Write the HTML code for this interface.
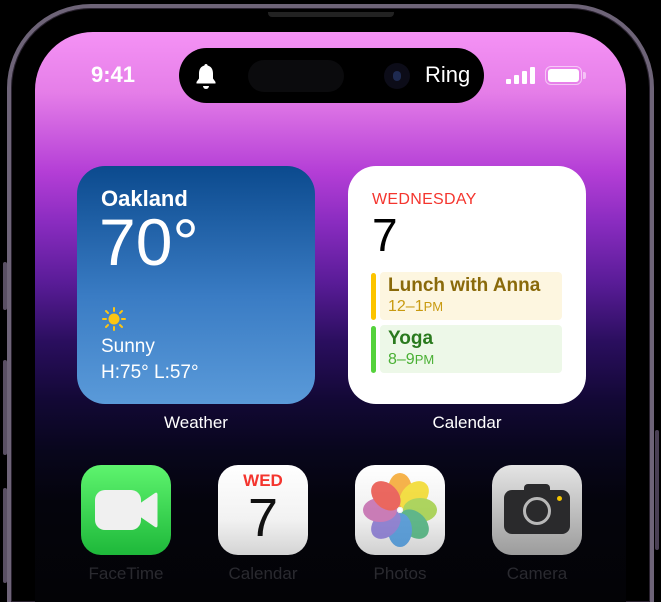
<!DOCTYPE html>
<html><head><meta charset="utf-8"><style>
*{margin:0;padding:0;box-sizing:border-box}
html,body{width:661px;height:602px;overflow:hidden}
body{background:#000;position:relative;font-family:"Liberation Sans",sans-serif}
.frame{position:absolute;left:7px;top:4px;width:647px;height:598px;border-radius:84px 84px 0 0;border:4px solid #6e6478;border-bottom:none;box-shadow:inset 0 0 0 1px #2a2230}
.screen{position:absolute;left:35px;top:32px;width:591px;height:570px;border-radius:58px 58px 0 0;background:linear-gradient(180deg,#f592f5 0px,#e57ee8 60px,#b43ed6 140px,#8a2cc0 190px,#5a1c98 250px,#2a0e5e 310px,#120834 370px,#08061c 420px,#04040c 470px,#030306 570px);overflow:hidden}
.abs{position:absolute}
.island{left:179px;top:48px;width:305px;height:55px;border-radius:28px;background:#000}
.w{border-radius:28px;width:238px;height:238px;top:166px}
.lbl{color:#fff;font-size:17px;text-align:center;width:238px;top:413px}
.icon{top:465px;width:90px;height:90px;border-radius:20px;overflow:hidden}
.il{top:564px;width:110px;text-align:center;font-size:17px;color:#2a2a30}
</style></head><body>
<div class="frame"></div>
<div class="abs" style="left:268px;top:12px;width:126px;height:5px;background:#222;border-radius:0 0 4px 4px"></div>
<div class="abs" style="left:3px;top:262px;width:4px;height:48px;background:#5a5064;border-radius:2px"></div>
<div class="abs" style="left:3px;top:360px;width:4px;height:95px;background:#5a5064;border-radius:2px"></div>
<div class="abs" style="left:3px;top:488px;width:4px;height:95px;background:#5a5064;border-radius:2px"></div>
<div class="abs" style="left:655px;top:430px;width:4px;height:120px;background:#4a4054;border-radius:2px"></div>
<div class="screen"></div>
<div class="abs" style="left:91px;top:62px;color:#fff;font-size:22px;font-weight:700">9:41</div>
<div class="abs island"></div>
<div class="abs" style="left:248px;top:60px;width:96px;height:32px;border-radius:16px;background:#0b0b0d"></div>
<div class="abs" style="left:384px;top:63px;width:26px;height:26px;border-radius:13px;background:#0c0c18"><div class="abs" style="left:9px;top:8px;width:8px;height:10px;border-radius:4px;background:#1e2a50"></div></div>
<svg class="abs" style="left:193px;top:62px" width="26" height="28" viewBox="0 0 26 28"><path d="M13 2c1 0 1.6.7 1.6 1.5 3.8 1 5.4 4 5.4 8v5l2.5 3.5v1.5H3.5V20L6 16.5v-5c0-4 1.6-7 5.4-8C11.4 2.7 12 2 13 2z" fill="#fff"/><path d="M10 24h6a3 3 0 0 1-6 0z" fill="#fff"/></svg>
<div class="abs" style="left:425px;top:62px;color:#fff;font-size:22px">Ring</div>
<div class="abs" style="left:506px;top:79px;width:5px;height:5px;background:#fff;border-radius:1px"></div>
<div class="abs" style="left:514px;top:75px;width:5px;height:9px;background:#fff;border-radius:1px"></div>
<div class="abs" style="left:522px;top:71px;width:5px;height:13px;background:#fff;border-radius:1px"></div>
<div class="abs" style="left:530px;top:67px;width:5px;height:17px;background:#fff;border-radius:1px"></div>
<div class="abs" style="left:545px;top:66px;width:37px;height:19px;border:1.5px solid rgba(255,255,255,.55);border-radius:6px;padding:2px"><div style="width:100%;height:100%;background:#fff;border-radius:3px"></div></div>
<div class="abs" style="left:583px;top:72px;width:3px;height:7px;background:rgba(255,255,255,.5);border-radius:0 2px 2px 0"></div>

<div class="abs w" style="left:77px;background:linear-gradient(180deg,#0b4a8e,#3a7cc4 55%,#5a9ad9)">
<div class="abs" style="left:24px;top:20px;color:#fff;font-size:22px;font-weight:700">Oakland</div>
<div class="abs" style="left:22px;top:38px;color:#fff;font-size:66px;font-weight:300">70°</div>
<svg class="abs" style="left:24px;top:140px" width="26" height="26" viewBox="0 0 26 26"><circle cx="13" cy="13" r="5.5" fill="#fcc514"/><g stroke="#fcc514" stroke-width="2" stroke-linecap="round"><path d="M13 2v3M13 21v3M2 13h3M21 13h3M5 5l2 2M19 19l2 2M5 21l2-2M19 7l2-2"/></g></svg>
<div class="abs" style="left:24px;top:170px;color:#fff;font-size:19px">Sunny</div>
<div class="abs" style="left:24px;top:196px;color:#fff;font-size:19px">H:75° L:57°</div>
</div>
<div class="abs lbl" style="left:77px">Weather</div>

<div class="abs w" style="left:348px;background:#fff">
<div class="abs" style="left:24px;top:25px;color:#f4352e;font-size:16px;letter-spacing:.3px">WEDNESDAY</div>
<div class="abs" style="left:24px;top:42px;color:#000;font-size:46px;font-weight:300">7</div>
<div class="abs" style="left:23px;top:107px;width:5px;height:47px;background:#fcc400;border-radius:3px"></div>
<div class="abs" style="left:32px;top:106px;width:182px;height:48px;background:#fdf6e0;border-radius:4px"></div>
<div class="abs" style="left:40px;top:109px;color:#8a6a0a;font-size:19px;font-weight:600">Lunch with Anna</div>
<div class="abs" style="left:40px;top:132px;color:#c89a10;font-size:16px">12–1<span style="font-size:13px">PM</span></div>
<div class="abs" style="left:23px;top:160px;width:5px;height:47px;background:#55d23c;border-radius:3px"></div>
<div class="abs" style="left:32px;top:159px;width:182px;height:48px;background:#edf8e8;border-radius:4px"></div>
<div class="abs" style="left:40px;top:162px;color:#2a7a1e;font-size:19px;font-weight:600">Yoga</div>
<div class="abs" style="left:40px;top:185px;color:#4ab034;font-size:16px">8–9<span style="font-size:13px">PM</span></div>
</div>
<div class="abs lbl" style="left:348px">Calendar</div>

<div class="abs icon" style="left:81px;background:linear-gradient(180deg,#5ef46e,#1eb83a)">
<div class="abs" style="left:14px;top:25px;width:46px;height:40px;border-radius:10px;background:#f0f0f0"></div>
<svg class="abs" style="left:56px;top:26px" width="22" height="38" viewBox="0 0 22 38"><path d="M2 13L18 2c1.5-1 2.5 0 2.5 1.5v31c0 1.5-1 2.5-2.5 1.5L2 25z" fill="#f0f0f0"/></svg>
</div>
<div class="abs icon" style="left:218px;background:linear-gradient(180deg,#fff,#f2f2f2 60%,#d4d4d4)">
<div class="abs" style="left:0;top:6px;width:90px;text-align:center;color:#f4352e;font-size:17px;font-weight:700">WED</div>
<div class="abs" style="left:0;top:22px;width:90px;text-align:center;color:#111;font-size:54px;font-weight:300">7</div>
</div>
<div class="abs icon" style="left:355px;background:linear-gradient(180deg,#fff,#eee 60%,#d0d0d0)">
<svg class="abs" style="left:0;top:0" width="90" height="90" viewBox="0 0 90 90"><g transform="translate(45,45)" opacity=".8">
<ellipse rx="12" ry="17" cy="-20" fill="#f4a020" transform="rotate(0)"/>
<ellipse rx="12" ry="17" cy="-20" fill="#f2d81a" transform="rotate(45)"/>
<ellipse rx="12" ry="17" cy="-20" fill="#9ccc3a" transform="rotate(90)"/>
<ellipse rx="12" ry="17" cy="-20" fill="#3ca870" transform="rotate(135)"/>
<ellipse rx="12" ry="17" cy="-20" fill="#3a8ad0" transform="rotate(180)"/>
<ellipse rx="12" ry="17" cy="-20" fill="#7a6ac8" transform="rotate(225)"/>
<ellipse rx="12" ry="17" cy="-20" fill="#c060a8" transform="rotate(270)"/>
<ellipse rx="12" ry="17" cy="-20" fill="#e8443a" transform="rotate(315)"/>
</g><circle cx="45" cy="45" r="2" fill="#fff"/></svg>
</div>
<div class="abs icon" style="left:492px;background:linear-gradient(180deg,#e4e4e4,#9c9c9c)">
<div class="abs" style="left:12px;top:25px;width:66px;height:44px;border-radius:8px;background:#2a2a2c"></div>
<div class="abs" style="left:32px;top:19px;width:26px;height:10px;border-radius:4px 4px 0 0;background:#2a2a2c"></div>
<div class="abs" style="left:31px;top:32px;width:28px;height:28px;border-radius:50%;border:3px solid #b8b8b8"></div>
<div class="abs" style="left:65px;top:31px;width:5px;height:5px;border-radius:50%;background:#f4c400"></div>
</div>
<div class="abs il" style="left:71px">FaceTime</div>
<div class="abs il" style="left:208px">Calendar</div>
<div class="abs il" style="left:345px">Photos</div>
<div class="abs il" style="left:482px">Camera</div>
</body></html>
